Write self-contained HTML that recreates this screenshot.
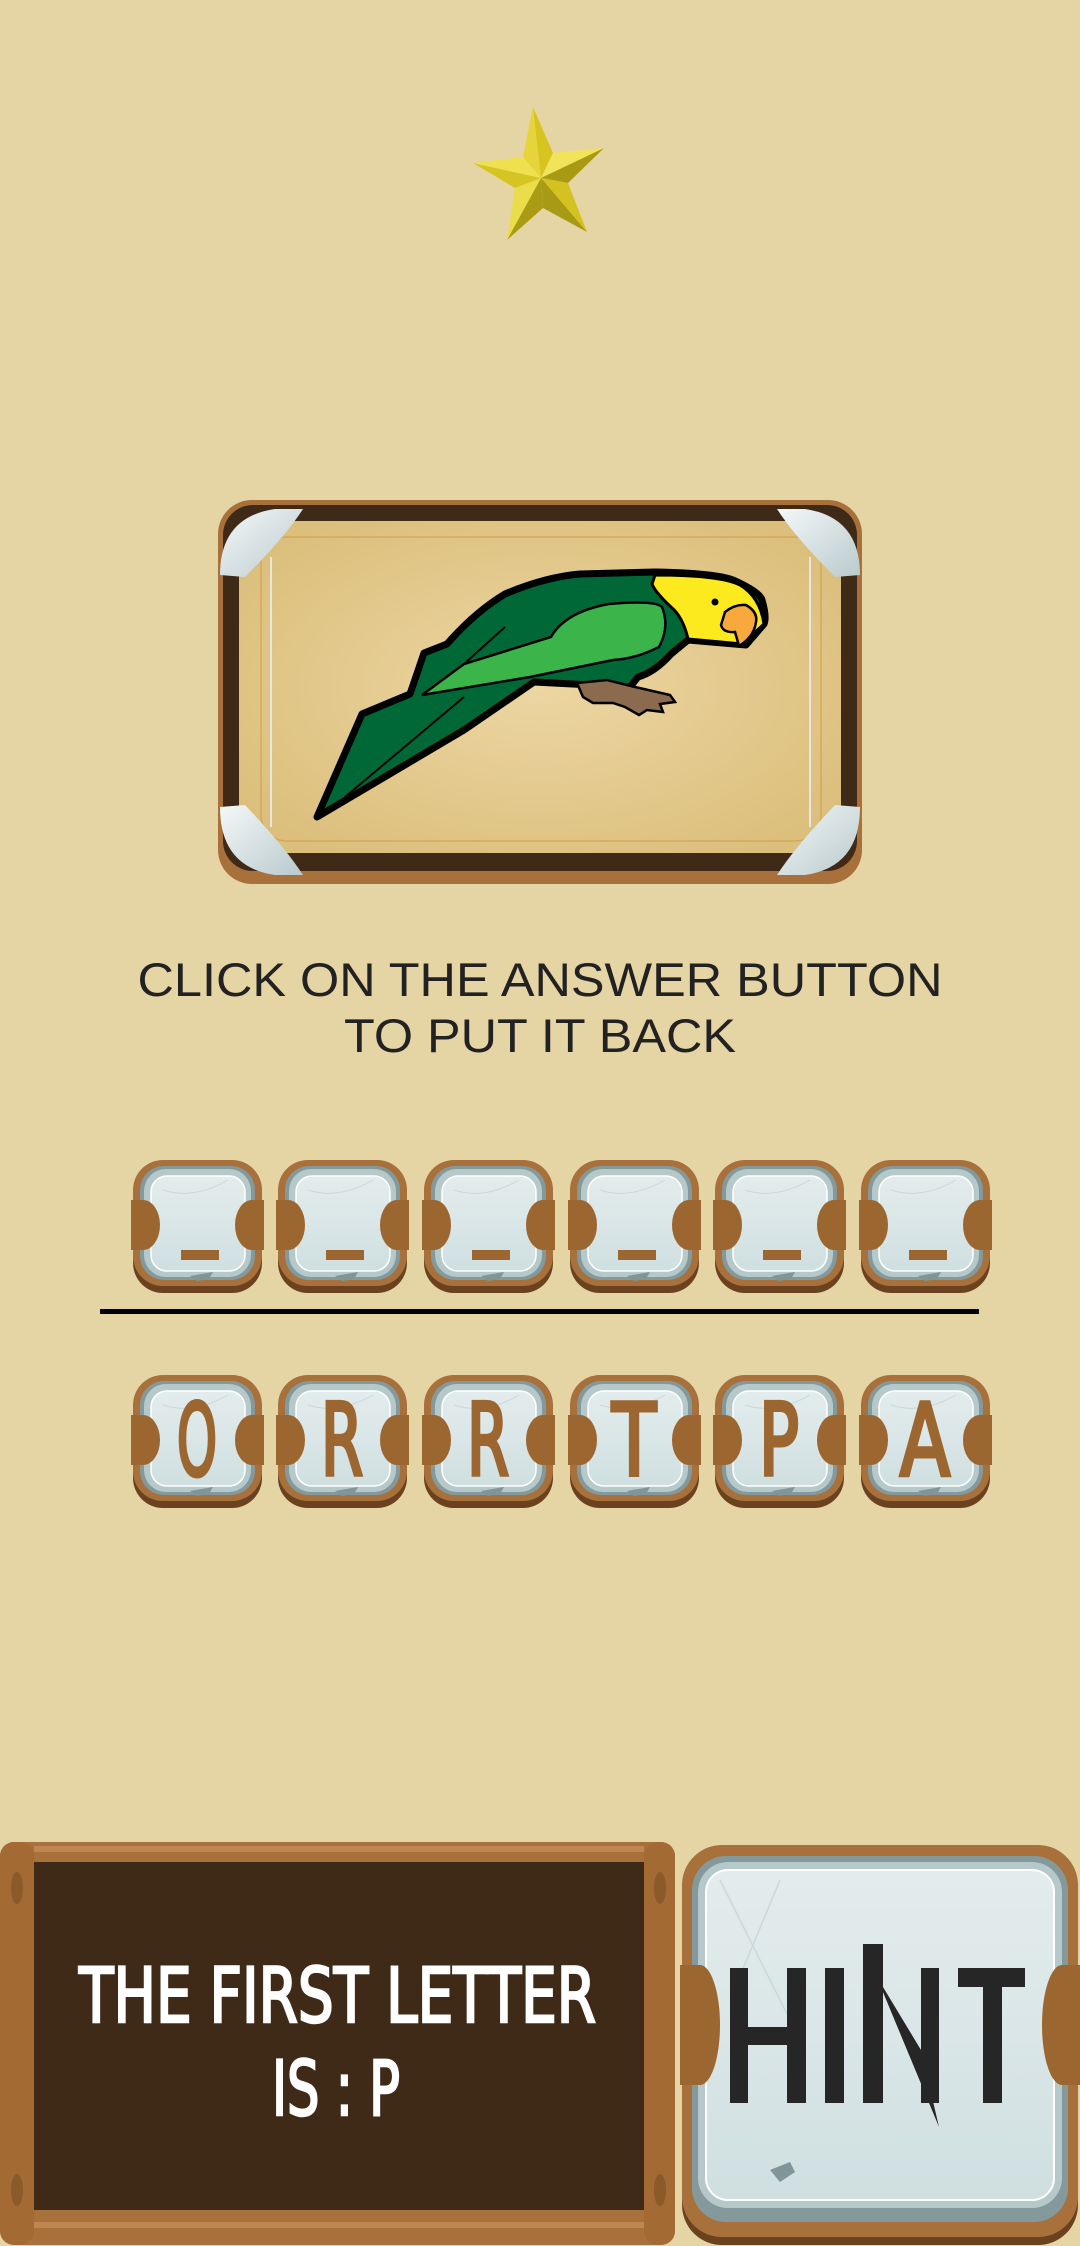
<!DOCTYPE html>
<html><head><meta charset="utf-8"><style>
html,body{margin:0;padding:0;background:#e6d5a4;}
svg{display:block}
</style></head><body>
<svg width="1080" height="2246" viewBox="0 0 1080 2246" xmlns="http://www.w3.org/2000/svg">
<defs>
<radialGradient id="parch" cx="50%" cy="50%" r="60%">
<stop offset="0" stop-color="#ecd6a2"/><stop offset="1" stop-color="#dcbf7d"/></radialGradient>
<linearGradient id="glass" x1="0" y1="0" x2="0" y2="1">
<stop offset="0" stop-color="#e3ecec"/><stop offset="0.5" stop-color="#dae6e7"/><stop offset="1" stop-color="#cfdfe0"/></linearGradient>
<linearGradient id="silver" x1="0" y1="0" x2="1" y2="1">
<stop offset="0" stop-color="#f4f8f8"/><stop offset="1" stop-color="#b9cacd"/></linearGradient>
<g id="tile">
<rect x="0" y="6" width="129" height="127" rx="30" fill="#6b4220"/>
<rect x="0" y="0" width="129" height="126" rx="30" fill="#a8703a"/>
<rect x="7" y="6" width="115" height="114" rx="24" fill="#84999c"/>
<rect x="11" y="9" width="107" height="108" rx="22" fill="#b5c8ca"/>
<rect x="18" y="16" width="94" height="95" rx="16" fill="url(#glass)" stroke="#ffffff" stroke-width="1.5"/>
<path d="M30 30 Q60 40 95 20" stroke="#c9d8da" stroke-width="1" fill="none"/>
<polygon points="57,116 80,112 76,119 64,121" fill="#7f9597"/>
<path d="M-2 40 L10 40 A17 25 0 0 1 10 90 L-2 90 Z" fill="#9c6631"/>
<path d="M131 40 L119 40 A17 25 0 0 0 119 90 L131 90 Z" fill="#9c6631"/>
</g>
</defs>
<rect width="1080" height="2246" fill="#e6d5a4"/>

<g>
<polygon points="541,178 533,107 523,157" fill="#e6d43a"/>
<polygon points="541,178 533,107 553,153" fill="#d8c41e"/>
<polygon points="541,178 604,148 553,153" fill="#f2e45a"/>
<polygon points="541,178 604,148 568,183" fill="#a89a12"/>
<polygon points="541,178 587,232 568,183" fill="#d4c220"/>
<polygon points="541,178 587,232 543,208" fill="#a89a14"/>
<polygon points="541,178 507,240 543,208" fill="#a99b14"/>
<polygon points="541,178 507,240 515,188" fill="#ebdc4a"/>
<polygon points="541,178 473,163 515,188" fill="#d6c422"/>
<polygon points="541,178 473,163 523,157" fill="#efe050"/>
</g>

<g transform="translate(215,497)">
<rect x="3" y="3" width="644" height="384" rx="34" fill="#a8703a"/>
<rect x="8" y="8" width="634" height="366" rx="30" fill="#3f2a17"/>
<rect x="24" y="24" width="602" height="332" rx="26" fill="url(#parch)"/>
<rect x="46" y="40" width="560" height="304" rx="26" fill="none" stroke="#d4a95a" stroke-width="1.5"/>
<line x1="56" y1="60" x2="56" y2="330" stroke="#e8e6e0" stroke-width="2"/>
<line x1="595" y1="60" x2="595" y2="330" stroke="#e8e6e0" stroke-width="2"/>
<path d="M5 78 Q5 20 60 12 L88 12 Q70 40 30 80 Z" fill="url(#silver)"/>
<path d="M645 78 Q645 20 590 12 L562 12 Q580 40 620 80 Z" fill="url(#silver)"/>
<path d="M5 310 Q5 370 60 378 L88 378 Q70 350 30 308 Z" fill="url(#silver)"/>
<path d="M645 310 Q645 370 590 378 L562 378 Q580 350 620 308 Z" fill="url(#silver)"/>
<path d="M102,320 L147,217 L195,197 L209,156 L232,147 Q260,115 290,97 Q330,80 365,77 L440,75 Q500,76 518,83 Q545,95 547,103 Q552,120 549,127 L531,148 L473,143 L456,157 Q440,175 423,180 L415,190 L319,185 L249,233 Z" fill="#006837" stroke="#000" stroke-width="7" stroke-linejoin="round"/>
<path d="M440,78 Q505,78 525,88 Q545,100 549,127 L527,147 L473,142 Q468,120 456,110 Q440,95 437,87 Z" fill="#fcea1e" stroke="#000" stroke-width="3"/>
<path d="M336,140 Q350,115 394,107 Q440,103 447,110 Q455,130 444,150 Q420,162 398,163 L315,180 L207,198 L249,167 Z" fill="#3bb54a" stroke="#000" stroke-width="2.5"/>
<path d="M249,167 L290,130" stroke="#000" stroke-width="2" fill="none"/>
<path d="M130,300 L249,200" stroke="#000" stroke-width="2" fill="none"/>
<path d="M510,115 Q520,107 531,108 Q543,115 541,125 Q539,140 524,149 L520,135 Q508,136 506,128 Z" fill="#f7a93b" stroke="#000" stroke-width="2.5"/>
<circle cx="500" cy="105" r="3.5" fill="#000"/>
<path d="M362,186 L392,183 L420,190 L455,198 L460,205 L445,207 L448,215 L432,213 L424,218 L410,210 L398,206 L378,206 L368,200 Z" fill="#8b6a4e" stroke="#000" stroke-width="2.5"/>
</g>

<text x="540" y="996" text-anchor="middle" font-family="Liberation Sans, sans-serif" font-size="47" fill="#222" textLength="805" lengthAdjust="spacingAndGlyphs">CLICK ON THE ANSWER BUTTON</text>
<text x="540" y="1052" text-anchor="middle" font-family="Liberation Sans, sans-serif" font-size="47" fill="#222" textLength="392" lengthAdjust="spacingAndGlyphs">TO PUT IT BACK</text>

<g fill="#9c6631">
<use href="#tile" x="133" y="1160"/><rect x="181" y="1250" width="38" height="10"/>
<use href="#tile" x="278" y="1160"/><rect x="326" y="1250" width="38" height="10"/>
<use href="#tile" x="424" y="1160"/><rect x="472" y="1250" width="38" height="10"/>
<use href="#tile" x="570" y="1160"/><rect x="618" y="1250" width="38" height="10"/>
<use href="#tile" x="715" y="1160"/><rect x="763" y="1250" width="38" height="10"/>
<use href="#tile" x="861" y="1160"/><rect x="909" y="1250" width="38" height="10"/>
</g>
<rect x="100" y="1309" width="879" height="5" fill="#000"/>

<g>
<use href="#tile" x="133" y="1375"/>
<use href="#tile" x="278" y="1375"/>
<use href="#tile" x="424" y="1375"/>
<use href="#tile" x="570" y="1375"/>
<use href="#tile" x="715" y="1375"/>
<use href="#tile" x="861" y="1375"/>
</g>
<g font-family="DejaVu Sans Condensed, Liberation Sans, sans-serif" font-size="100" fill="#9c6631" stroke="#9c6631" stroke-width="4" text-anchor="middle">
<text x="197" y="1475" textLength="40" lengthAdjust="spacingAndGlyphs">O</text>
<text x="342" y="1475" textLength="42" lengthAdjust="spacingAndGlyphs">R</text>
<text x="488" y="1475" textLength="42" lengthAdjust="spacingAndGlyphs">R</text>
<text x="634" y="1475" textLength="44" lengthAdjust="spacingAndGlyphs">T</text>
<text x="779" y="1475" textLength="40" lengthAdjust="spacingAndGlyphs">P</text>
<text x="925" y="1475" textLength="50" lengthAdjust="spacingAndGlyphs">A</text>
</g>

<g>
<rect x="0" y="1842" width="675" height="403" rx="14" fill="#a8703a"/>
<rect x="34" y="1862" width="610" height="348" fill="#3f2a17"/>
<rect x="34" y="1846" width="610" height="6" fill="#c08650"/>
<rect x="34" y="2222" width="610" height="6" fill="#c08650"/>
<rect x="0" y="1842" width="34" height="403" rx="14" fill="#a46a34"/>
<rect x="644" y="1842" width="31" height="403" rx="14" fill="#a46a34"/>
<ellipse cx="17" cy="1888" rx="6" ry="16" fill="#8a5a2a"/>
<ellipse cx="17" cy="2190" rx="6" ry="16" fill="#8a5a2a"/>
<ellipse cx="660" cy="1888" rx="6" ry="16" fill="#8a5a2a"/>
<ellipse cx="660" cy="2190" rx="6" ry="16" fill="#8a5a2a"/>
<g font-family="DejaVu Sans Condensed, Liberation Sans, sans-serif" font-size="76" fill="#fff" stroke="#fff" stroke-width="2.5">
<text x="79" y="2022" textLength="517" lengthAdjust="spacingAndGlyphs">THE FIRST LETTER</text>
<text x="272" y="2115" textLength="128" lengthAdjust="spacingAndGlyphs">IS : P</text>
</g>
</g>

<g>
<rect x="682" y="1848" width="396" height="397" rx="40" fill="#6b4220"/>
<rect x="682" y="1845" width="396" height="392" rx="40" fill="#a8703a"/>
<rect x="692" y="1856" width="376" height="366" rx="34" fill="#84999c"/>
<rect x="698" y="1862" width="364" height="346" rx="30" fill="#b5c8ca"/>
<rect x="706" y="1870" width="348" height="330" rx="22" fill="url(#glass)" stroke="#fff" stroke-width="2"/>
<path d="M720 1880 L790 2020 M780 1880 L730 2000" stroke="#c9d8da" stroke-width="1.5" fill="none"/>
<polygon points="770,2170 790,2162 795,2172 780,2182" fill="#7f9597"/>
<path d="M680 1965 L700 1965 A20 60 0 0 1 700 2085 L680 2085 Z" fill="#9c6631"/>
<path d="M1082 1965 L1062 1965 A20 60 0 0 0 1062 2085 L1082 2085 Z" fill="#9c6631"/>
<g fill="#262626">
<rect x="730" y="1968" width="18" height="135"/>
<rect x="787" y="1968" width="19" height="135"/>
<rect x="748" y="2027" width="39" height="18"/>
<rect x="825" y="1968" width="19" height="135"/>
<rect x="863" y="1944" width="20" height="159"/>
<polygon points="863,1944 883,1987 921,2050 939,2127"/>
<rect x="921" y="1968" width="18" height="135"/>
<rect x="958" y="1968" width="67" height="19"/>
<rect x="983" y="1968" width="19" height="135"/>
</g>
</g>
</svg>
</body></html>
